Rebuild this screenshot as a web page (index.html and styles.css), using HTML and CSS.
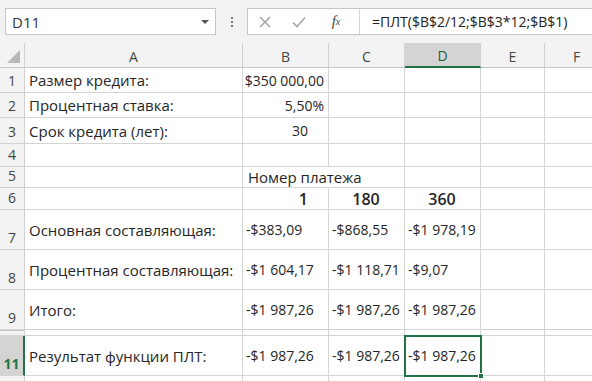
FILE: index.html
```html
<!DOCTYPE html>
<html lang="ru">
<head>
    <meta charset="UTF-8">
    <title>ПЛТ</title>
    <link rel="stylesheet" href="styles.css">
</head>
<body>
    <div class="formula-row">
        <div class="name-box">
            <span>D11</span>
            <span class="drop"></span>
        </div>
        <div class="grip"><i></i><i></i><i></i></div>
        <div class="formula-box">
            <span class="fb-btn">
                <svg width="12" height="12" viewBox="0 0 12 12"><path d="M1 1L11 11M11 1L1 11" stroke="#a6a6a6" stroke-width="1.6" fill="none"/></svg>
            </span>
            <span class="fb-btn">
                <svg width="14" height="12" viewBox="0 0 14 12"><path d="M1 6.5L5 10.5L13 1.5" stroke="#a6a6a6" stroke-width="1.6" fill="none"/></svg>
            </span>
            <span class="fb-btn fx">f<sub>x</sub></span>
            <div class="formula-text">=ПЛТ($B$2/12;$B$3*12;$B$1)</div>
        </div>
    </div>

    <div class="sheet">
        <!-- заголовки столбцов -->
        <div class="corner"><span class="tri"></span></div>
        <div class="ch">A</div>
        <div class="ch">B</div>
        <div class="ch">C</div>
        <div class="ch ch-active">D</div>
        <div class="ch">E</div>
        <div class="ch">F</div>

        <div class="rh">1</div>
        <div class="c t">Размер кредита:</div>
        <div class="c num">$350 000,00</div>
        <div class="c"></div><div class="c"></div><div class="c"></div><div class="c"></div>

        <div class="rh">2</div>
        <div class="c t">Процентная ставка:</div>
        <div class="c num">5,50%</div>
        <div class="c"></div><div class="c"></div><div class="c"></div><div class="c"></div>

        <div class="rh">3</div>
        <div class="c t">Срок кредита (лет):</div>
        <div class="c num indent">30</div>
        <div class="c"></div><div class="c"></div><div class="c"></div><div class="c"></div>

        <div class="rh">4</div>
        <div class="c"></div><div class="c"></div><div class="c"></div><div class="c"></div><div class="c"></div><div class="c"></div>

        <div class="rh">5</div>
        <div class="c"></div>
        <div class="c t spill">Номер платежа</div>
        <div class="c"></div><div class="c"></div><div class="c"></div><div class="c"></div>

        <div class="rh">6</div>
        <div class="c"></div>
        <div class="c num indent bold">1</div>
        <div class="c mid bold">180</div>
        <div class="c mid bold">360</div>
        <div class="c"></div><div class="c"></div>

        <div class="rh">7</div>
        <div class="c t">Основная составляющая:</div>
        <div class="c">-$383,09</div>
        <div class="c">-$868,55</div>
        <div class="c">-$1 978,19</div>
        <div class="c"></div><div class="c"></div>

        <div class="rh">8</div>
        <div class="c t">Процентная составляющая:</div>
        <div class="c">-$1 604,17</div>
        <div class="c">-$1 118,71</div>
        <div class="c">-$9,07</div>
        <div class="c"></div><div class="c"></div>

        <div class="rh">9</div>
        <div class="c t">Итого:</div>
        <div class="c">-$1 987,26</div>
        <div class="c">-$1 987,26</div>
        <div class="c">-$1 987,26</div>
        <div class="c"></div><div class="c"></div>

        <div class="rh hidden-row"></div>
        <div class="c"></div><div class="c"></div><div class="c"></div><div class="c"></div><div class="c"></div><div class="c"></div>

        <div class="rh rh-active">11</div>
        <div class="c t">Результат функции ПЛТ:</div>
        <div class="c">-$1 987,26</div>
        <div class="c">-$1 987,26</div>
        <div class="c selected">-$1 987,26<span class="handle"></span></div>
        <div class="c"></div><div class="c"></div>

        <div class="rh"></div>
        <div class="c"></div><div class="c"></div><div class="c"></div><div class="c"></div><div class="c"></div><div class="c"></div>
    </div>
</body>
</html>
```

FILE: styles.css
```css
* {
    box-sizing: border-box;
}
body {
    margin: 0;
    width: 592px;
    height: 381px;
    overflow: hidden;
    font-family: "Open Sans", "Noto Sans", sans-serif;
    font-size: 14px;
    color: #262626;
    background-color: #f2f2f2;
}
.formula-row {
    display: flex;
    align-items: center;
    height: 43px;
    padding: 0 0 0 5px;
}
.name-box {
    display: flex;
    align-items: center;
    justify-content: space-between;
    width: 211px;
    height: 27px;
    padding: 0 6px 0 6px;
    background-color: white;
    border: 1px solid #c6c6c6;
    font-size: 15px;
    color: #333;
}
.drop {
    width: 0;
    height: 0;
    border-left: 4px solid transparent;
    border-right: 4px solid transparent;
    border-top: 4px solid #555;
}
.grip {
    display: flex;
    flex-direction: column;
    gap: 2px;
    width: 31px;
    align-items: center;
}
.grip i {
    display: block;
    width: 2px;
    height: 2px;
    background-color: #777;
}
.formula-box {
    flex: 1;
    display: flex;
    align-items: center;
    height: 27px;
    margin-right: -4px;
    background-color: white;
    border: 1px solid #c6c6c6;
}
.fb-btn {
    display: flex;
    justify-content: center;
    align-items: center;
    width: 34px;
    height: 100%;
}
.fx {
    width: 44px;
    font-family: "Liberation Serif", serif;
    font-style: italic;
    font-size: 15px;
    color: #444;
    border-right: 1px solid #d4d4d4;
    padding-right: 3px;
}
.fx sub {
    font-size: 10px;
    vertical-align: -2px;
}
.formula-text {
    padding-left: 12px;
    font-size: 14px;
    color: #222;
    white-space: nowrap;
}
.sheet {
    display: grid;
    grid-template-columns: 25px 218px 86px 76px 76px 64px 64px;
    grid-template-rows: 25px 25px 25px 26px 23px 21px 22px 40px 40px 40px 6px 40px 40px;
    background-color: white;
    width: 609px;
}
.corner, .ch, .rh {
    background-color: #f3f3f3;
    color: #444;
    border-right: 1px solid #d0d0d0;
    border-bottom: 1px solid #c6c6c6;
}
.corner {
    position: relative;
}
.tri {
    position: absolute;
    right: 4px;
    bottom: 4px;
    width: 0;
    height: 0;
    border-left: 13px solid transparent;
    border-bottom: 13px solid #b8b8b8;
}
.ch {
    display: flex;
    justify-content: center;
    align-items: center;
    padding-top: 2px;
}
.ch-active {
    background-color: #d4d4d4;
    color: #1f5f3c;
    border-bottom: 2px solid #217346;
}
.rh {
    display: flex;
    justify-content: center;
    align-items: flex-end;
    padding-bottom: 1px;
    line-height: 20px;
    border-bottom-color: #d4d4d4;
}
.rh-active {
    background-color: #d4d4d4;
    color: #217346;
    font-weight: bold;
    border-right: 2px solid #217346;
}
.hidden-row {
    border-top: 1px solid #c6c6c6;
}
.c {
    display: flex;
    align-items: center;
    padding: 0 4px 0 3px;
    white-space: nowrap;
    border-right: 1px solid #d4d4d4;
    border-bottom: 1px solid #d4d4d4;
}
.t {
    font-size: 15px;
    padding-left: 4px;
}
.num {
    justify-content: flex-end;
}
.indent {
    padding-right: 20px;
}
.mid {
    justify-content: center;
}
.bold {
    font-size: 16px;
    font-weight: 600;
}
.spill {
    border-right: none;
    padding-left: 5px;
}
.selected {
    position: relative;
    outline: 2px solid #217346;
    outline-offset: -1px;
}
.handle {
    position: absolute;
    right: -4px;
    bottom: -4px;
    width: 6px;
    height: 6px;
    background-color: #217346;
    border: 1px solid white;
}
```
